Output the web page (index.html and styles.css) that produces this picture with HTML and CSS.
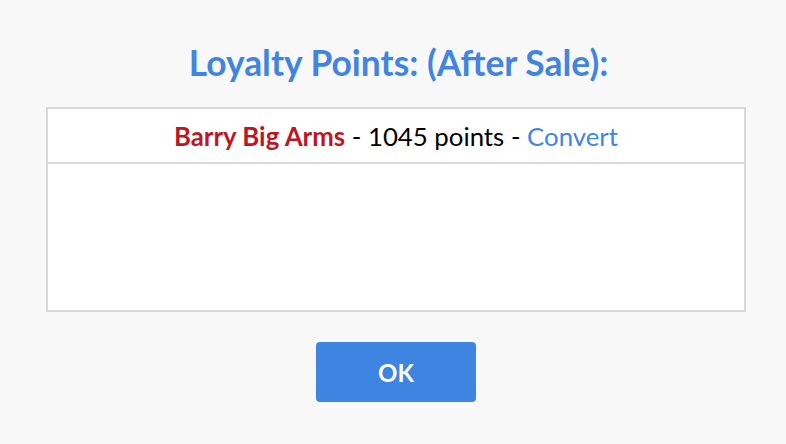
FILE: index.html
```html
<!DOCTYPE html>
<html lang="en">
<head>
    <meta charset="UTF-8">
    <title>Loyalty Points</title>
    <link rel="stylesheet" href="styles.css">
</head>
<body>
    <div class="dialog">
        <h1 class="title">Loyalty Points: (After Sale):</h1>
        <div class="points-box">
            <div class="points-row">
                <span class="customer">Barry Big Arms</span> - 1045 points - <a class="convert" href="#">Convert</a>
            </div>
            <div class="points-empty"></div>
        </div>
        <button class="ok-btn">OK</button>
    </div>
</body>
</html>
```

FILE: styles.css
```css
body {
    margin: 0;
    background: #F8F8F8;
    font-family: Lato, "Open Sans", sans-serif;
}
.dialog {
    display: flex;
    flex-direction: column;
    align-items: center;
    padding: 40px 0 0 6px;
}
.title {
    margin: 0 0 22px 5px;
    font-size: 35.4px;
    font-weight: 700;
    line-height: 45px;
    color: #4285E0;
}
.points-box {
    width: 696px;
    border: 2px solid #D8D8D8;
    background: #FFFFFF;
}
.points-row {
    height: 53px;
    border-bottom: 2px solid #D8D8D8;
    display: flex;
    align-items: center;
    justify-content: center;
    white-space: pre;
    font-size: 25.8px;
    color: #000000;
}
.customer {
    font-weight: 700;
    color: #BC1823;
}
.convert {
    color: #4285E0;
    text-decoration: none;
}
.points-empty {
    height: 146px;
}
.ok-btn {
    margin-top: 30px;
    width: 160px;
    height: 60px;
    border: none;
    border-radius: 4px;
    background: #3D85E0;
    color: #FFFFFF;
    font-family: Lato, sans-serif;
    font-size: 24px;
    font-weight: 700;
    cursor: pointer;
}
```
